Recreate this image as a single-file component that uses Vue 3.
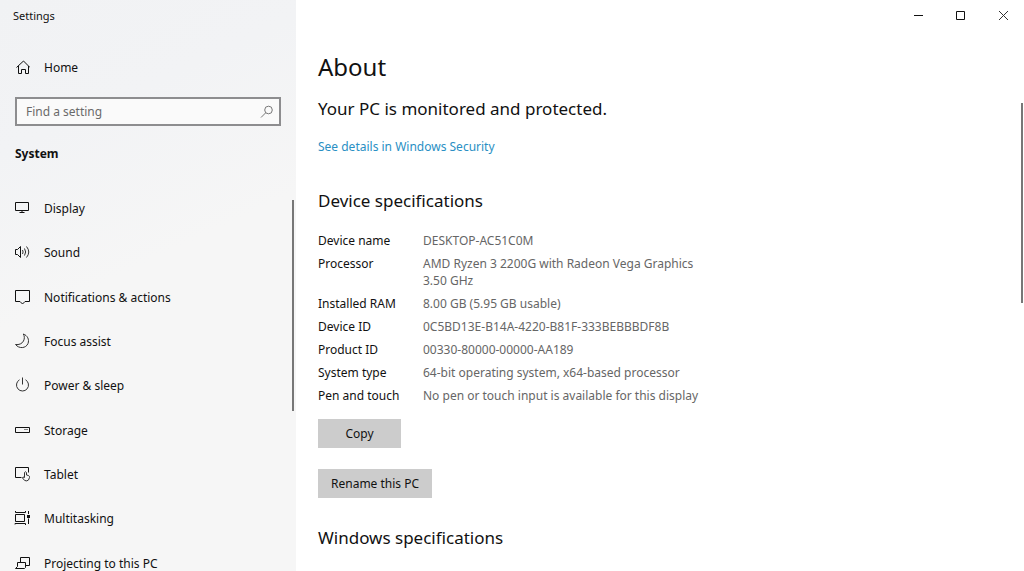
<script setup>
import { ref } from 'vue'

const query = ref('')
const selected = ref('')

const items = [
  { id: 'display', label: 'Display' },
  { id: 'sound', label: 'Sound' },
  { id: 'notifications', label: 'Notifications & actions' },
  { id: 'focus', label: 'Focus assist' },
  { id: 'power', label: 'Power & sleep' },
  { id: 'storage', label: 'Storage' },
  { id: 'tablet', label: 'Tablet' },
  { id: 'multitasking', label: 'Multitasking' },
  { id: 'projecting', label: 'Projecting to this PC' }
]

const specs = [
  ['Device name', ['DESKTOP-AC51C0M']],
  ['Processor', ['AMD Ryzen 3 2200G with Radeon Vega Graphics', '3.50 GHz']],
  ['Installed RAM', ['8.00 GB (5.95 GB usable)']],
  ['Device ID', ['0C5BD13E-B14A-4220-B81F-333BEBBBDF8B']],
  ['Product ID', ['00330-80000-00000-AA189']],
  ['System type', ['64-bit operating system, x64-based processor']],
  ['Pen and touch', ['No pen or touch input is available for this display']]
]
</script>

<template>
  <div class="window">
    <aside class="sidebar">
      <div class="title">Settings</div>
      <a class="home" href="#home">
        <svg class="icon" viewBox="0 0 16 16" aria-hidden="true">
          <path d="M2.500 8.500 9.500 2 16 8.500M4.500 7V14.500H7.500V10.500H11.500V14.500H14.500V7" />
        </svg>
        <span>Home</span>
      </a>
      <div class="search">
        <input v-model="query" type="text" placeholder="Find a setting" aria-label="Find a setting" />
        <svg class="glass" viewBox="0 0 14 14" aria-hidden="true">
          <circle cx="8.500" cy="5" r="3.800" />
          <path d="M5.700 7.800 1 12.500" />
        </svg>
      </div>
      <h2 class="group">System</h2>
      <nav class="nav">
        <a v-for="item in items" :key="item.id" :href="'#' + item.id" @click="selected = item.id">
          <svg class="icon" viewBox="0 0 16 16" aria-hidden="true">
            <g v-if="item.id === 'display'">
              <path d="M1.500 2.500H14.500V10.500H1.500ZM8 10.500V12.500M5.500 12.500H10.500" />
            </g>
            <g v-else-if="item.id === 'sound'">
              <path d="M1.500 5.500H3.500L6.500 2.500V13.500L3.500 10.500H1.500Z" />
              <path class="fine" d="M8.500 6Q9.700 8 8.500 10M10.500 4.500Q12.800 8 10.500 11.500M12.500 2.500Q17 8 12.500 13.500" />
            </g>
            <g v-else-if="item.id === 'notifications'">
              <path d="M1.500 1.500H15.500V12.500H11L8.500 15 6 12.500H1.500Z" />
            </g>
            <g v-else-if="item.id === 'focus'" class="fine">
              <path d="M9.300 1C13.500 2.500 15.500 6.500 14 10.500C12 15.500 5 16 1.500 11.500C5 12 8 10.800 9.500 8C10.800 5.500 10.500 3 9.300 1Z" />
            </g>
            <g v-else-if="item.id === 'power'" class="fine">
              <path d="M8.500 .500V7.500M5.500 2.800A6 6 0 1 0 11.500 2.800" />
            </g>
            <g v-else-if="item.id === 'storage'">
              <path d="M1.500 5.500H15.500V10.500H1.500ZM10.500 7.500H11.500M12.500 7.500H13.500" />
            </g>
            <g v-else-if="item.id === 'tablet'">
              <path d="M7.500 11.500H1.500V1.500H14.500V6.500" />
              <path class="fine" d="M10.500 11.500V6.500Q11.500 5 12.500 6.500V9L14.500 9.500Q15.700 10 15.500 11.500L14.500 14Q13 15.500 10.700 14.500L8.500 12Q8.500 10.300 10.500 11.500" />
            </g>
            <g v-else-if="item.id === 'multitasking'">
              <path d="M1.500 1V2.500H11.500V1M1.500 4.500H10.500V11.500H1.500ZM1 14.500V13.500H11.500V15M14.500 1V4M14.500 8.500V14" />
              <rect class="dot" x="13" y="5" width="3" height="3" />
            </g>
            <g v-else>
              <path d="M6.500 7V2.500H15.500V10.500H11.500M3.500 11.500V7.500H11.500V12.500M3.500 11.500 1.500 13.500H10.500L11.500 12.500" />
            </g>
          </svg>
          <span>{{ item.label }}</span>
        </a>
      </nav>
      <div class="thumb side-thumb"></div>
    </aside>

    <main class="main">
      <header class="controls">
        <button type="button" aria-label="Minimize">
          <svg viewBox="0 0 10 10"><path d="M0 4.500H9" /></svg>
        </button>
        <button type="button" aria-label="Maximize">
          <svg viewBox="0 0 10 10"><path d="M.500 .500H8.500V8.500H.500Z" /></svg>
        </button>
        <button type="button" aria-label="Close">
          <svg class="fine" viewBox="0 0 10 10"><path d="M1 0 10 9M10 0 1 9" /></svg>
        </button>
      </header>
      <div class="content">
        <h1>About</h1>
        <p class="status">Your PC is monitored and protected.</p>
        <a class="link" href="#security">See details in Windows Security</a>
        <h2 class="section">Device specifications</h2>
        <table class="specs">
          <tbody>
            <tr v-for="[name, lines] in specs" :key="name">
              <th scope="row">{{ name }}</th>
              <td><div v-for="line in lines" :key="line">{{ line }}</div></td>
            </tr>
          </tbody>
        </table>
        <button class="action copy" type="button">Copy</button>
        <button class="action" type="button">Rename this PC</button>
        <h2 class="section last">Windows specifications</h2>
      </div>
      <div class="thumb main-thumb"></div>
    </main>
  </div>
</template>

<style>
body {
  margin: 0;
  background: #fff;
}
</style>

<style scoped>
.window {
  display: flex;
  height: 100vh;
  overflow: hidden;
  font-family: "Noto Sans", "Open Sans", sans-serif;
  font-size: 12px;
  line-height: 16px;
  color: #111;
}

.sidebar {
  position: relative;
  flex: 0 0 296px;
  box-sizing: border-box;
  background: linear-gradient(155deg, #f1f2f4 0, #f2f3f5 140px, #f6f6f6 300px);
}

.title {
  padding: 8px 13px;
  font-size: 11px;
}

.home,
.nav a {
  display: flex;
  align-items: center;
  gap: 14px;
  padding-left: 14px;
  color: inherit;
  text-decoration: none;
}

.home {
  height: 40px;
  margin-top: 16px;
}

.icon {
  width: 16px;
  height: 16px;
  flex: none;
  margin-bottom: 2px;
}

svg {
  fill: none;
  stroke: #111;
  stroke-width: 1;
}

.fine {
  stroke: #333;
}

.dot {
  fill: #111;
  stroke: none;
}

.search {
  display: flex;
  align-items: center;
  box-sizing: border-box;
  height: 29px;
  margin: 9px 15px 0;
  padding: 0 5px 0 9px;
  border: 2px solid #8d8d8f;
  background: #fafafa;
}

.search input {
  flex: 1;
  min-width: 0;
  padding: 0;
  border: 0;
  outline: 0;
  background: none;
  font: inherit;
  color: #111;
}

.search input::placeholder {
  color: #6a6a6a;
  opacity: 1;
}

.glass {
  width: 14px;
  height: 14px;
  stroke: #777;
}

.group {
  margin: 20px 15px 25px;
  font-size: 12px;
  line-height: 16px;
  font-weight: 700;
}

.nav {
  display: grid;
  grid-template-rows: repeat(9, 1fr);
  height: 399px;
}

.thumb {
  position: absolute;
  width: 2px;
  background: #777;
}

.side-thumb {
  top: 200px;
  right: 2px;
  height: 211px;
}

.main-thumb {
  top: 103px;
  right: 1px;
  height: 200px;
}

.main {
  position: relative;
  flex: 1;
  min-width: 0;
}

.controls {
  display: flex;
  justify-content: flex-end;
  height: 31px;
}

.controls button {
  display: grid;
  place-items: center;
  width: 42px;
  padding: 0;
  border: 0;
  background: none;
}

.controls svg {
  width: 10px;
  height: 10px;
}

.content {
  padding: 20px 22px 0;
}

h1 {
  margin: 0;
  font-size: 24px;
  line-height: 32px;
  font-weight: 400;
}

.status {
  margin: 14px 0 0;
  font-size: 17px;
  line-height: 24px;
}

.link {
  display: block;
  width: fit-content;
  margin-top: 18px;
  color: #2a8fc4;
  text-decoration: none;
}

.section {
  margin: 34px 0 0;
  font-size: 17px;
  line-height: 24px;
  font-weight: 400;
}

.specs {
  margin-top: 16px;
  border-collapse: collapse;
  line-height: 17px;
}

.specs th {
  width: 105px;
  padding: 3px 0;
  font-weight: 400;
  text-align: left;
  vertical-align: top;
}

.specs td {
  padding: 3px 0;
  color: #666;
}

.action {
  display: block;
  height: 29px;
  margin-top: 21px;
  padding: 0 13px;
  border: 0;
  background: #ccc;
  font: inherit;
  color: #111;
}

.copy {
  width: 83px;
  margin-top: 12px;
}

.last {
  margin-top: 28px;
}
</style>
